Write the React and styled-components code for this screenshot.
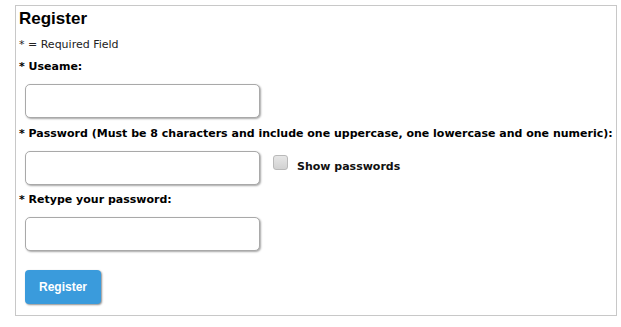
import styled, { createGlobalStyle } from "styled-components";

const GlobalStyle = createGlobalStyle`
  body {
    margin: 0;
    background: #fff;
    font-family: "DejaVu Sans", Verdana, sans-serif;
    color: #111;
  }
`;

const Panel = styled.div`
  box-sizing: border-box;
  margin: 5px 0 0 15px;
  width: 602px;
  height: 311px;
  border: 1px solid #c8c8c8;
  padding: 3px 0 0 3px;
`;

const Title = styled.h2`
  margin: 0;
  font-family: "Liberation Sans", Arial, sans-serif;
  font-size: 17px;
  font-weight: bold;
  color: #000;
  line-height: 20px;
`;

const Note = styled.div`
  margin-top: 9px;
  font-size: 11px;
  line-height: 14px;
  color: #222;
`;

const Label = styled.div`
  margin-top: ${(p) => p.$top || 8}px;
  font-size: 11px;
  font-weight: bold;
  line-height: 14px;
  color: #000;
`;

const Row = styled.div`
  display: flex;
  align-items: flex-start;
  margin: 10px 0 0 6px;
`;

const Input = styled.input`
  box-sizing: border-box;
  width: 235px;
  height: 34px;
  border: 1px solid #a9a9a9;
  border-radius: 5px;
  background: #fff;
  box-shadow: 1px 1px 2px rgba(0, 0, 0, 0.35);
  outline: none;
`;

const CheckLabel = styled.label`
  display: flex;
  align-items: flex-start;
  margin: 4px 0 0 13px;
  font-size: 11px;
  font-weight: bold;
  line-height: 14px;
`;

const Box = styled.span`
  box-sizing: border-box;
  width: 15px;
  height: 15px;
  border: 1px solid #b9b9b9;
  border-radius: 3px;
  background: linear-gradient(#e6e6e6, #d2d2d2);
  margin-right: 9px;
`;

const CheckText = styled.span`
  margin-top: 5px;
`;

const Button = styled.button`
  margin: 19px 0 0 6px;
  width: 76px;
  height: 34px;
  border: none;
  border-radius: 4px;
  background: #3a9bdc;
  box-shadow: 1px 1px 2px rgba(0, 0, 0, 0.45);
  color: #fff;
  font-family: "Liberation Sans", Arial, sans-serif;
  font-size: 12px;
  font-weight: bold;
`;

export default function App() {
  return (
    <>
      <GlobalStyle />
      <Panel>
        <Title>Register</Title>
        <Note>* = Required Field</Note>
        <Label>* Useame:</Label>
        <Row>
          <Input type="text" />
        </Row>
        <Label $top={9}>
          * Password (Must be 8 characters and include one uppercase, one lowercase and one numeric):
        </Label>
        <Row>
          <Input type="password" />
          <CheckLabel>
            <Box />
            <CheckText>Show passwords</CheckText>
          </CheckLabel>
        </Row>
        <Label $top={8}>* Retype your password:</Label>
        <Row>
          <Input type="password" />
        </Row>
        <Button>Register</Button>
      </Panel>
    </>
  );
}
